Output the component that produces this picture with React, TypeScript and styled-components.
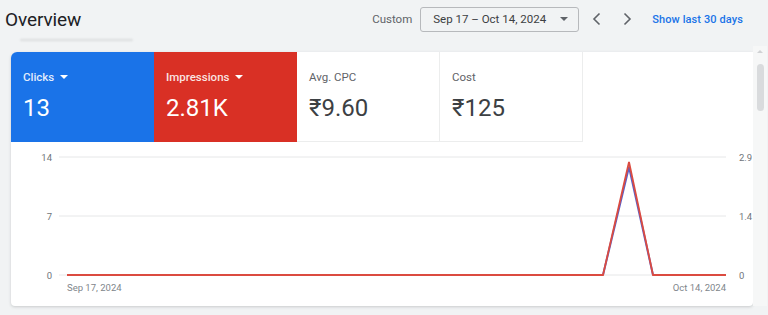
import React from "react";
import styled, { createGlobalStyle } from "styled-components";

const Global = createGlobalStyle`
  html, body { margin: 0; padding: 0; }
  body {
    background: #f1f3f4;
    font-family: Roboto, "Noto Sans", Arial, sans-serif;
    width: 768px;
    height: 315px;
    overflow: hidden;
  }
`;

const Page = styled.div`
  width: 768px;
  height: 315px;
  display: flex;
  flex-direction: column;
`;

const Header = styled.header`
  height: 38px;
  display: flex;
  align-items: center;
  padding: 0 25px 0 5px;
  box-sizing: border-box;
`;

const Title = styled.h1`
  margin: 0;
  font-size: 19px;
  font-weight: 400;
  color: #202124;
  letter-spacing: -0.1px;
  flex: 1;
`;

const RangeLabel = styled.span`
  font-size: 11.5px;
  color: #5f6368;
  margin-right: 8px;
`;

const DateBox = styled.div`
  width: 159px;
  height: 25px;
  margin-right: 3px;
  box-sizing: border-box;
  border: 1px solid #b7b9bc;
  border-radius: 3px;
  display: flex;
  align-items: center;
  justify-content: space-between;
  padding: 0 10px 0 12px;
  font-size: 11.5px;
  color: #3c4043;
`;

const Caret = styled.span<{ $color: string }>`
  display: inline-block;
  width: 0;
  height: 0;
  border-left: 4px solid transparent;
  border-right: 4px solid transparent;
  border-top: 4px solid ${(p) => p.$color};
`;

const NavButton = styled.button`
  width: 30px;
  height: 28px;
  border: 0;
  background: none;
  padding: 0;
  display: flex;
  align-items: center;
  justify-content: center;
  color: #5f6368;
`;

const LinkText = styled.a`
  margin-left: 10px;
  font-size: 11px;
  font-weight: 500;
  color: #1a73e8;
  text-decoration: none;
  letter-spacing: 0.1px;
`;

const TabShadow = styled.div`
  margin-left: 20px;
  width: 113px;
  height: 2px;
  margin-top: 1px;
  background: rgba(0, 0, 0, 0.09);
  filter: blur(1px);
  border-radius: 2px;
`;

const Body = styled.div`
  display: flex;
  margin-top: 11px;
`;

const Card = styled.section`
  margin-left: 11px;
  width: 742px;
  height: 254px;
  background: #fff;
  border-radius: 6px 0 4px 4px;
  box-shadow: 0 1px 3px rgba(60, 64, 67, 0.22);
  overflow: hidden;
  display: flex;
  flex-direction: column;
`;

const Tiles = styled.div`
  display: flex;
  height: 90px;
`;

const Tile = styled.div<{ $bg?: string }>`
  width: 143px;
  box-sizing: border-box;
  padding: 18px 0 0 12px;
  background: ${(p) => p.$bg || "#fff"};
  color: ${(p) => (p.$bg ? "#fff" : "#3c4043")};
  border-right: ${(p) => (p.$bg ? "none" : "1px solid #eceded")};
  border-bottom: ${(p) => (p.$bg ? "none" : "1px solid #eceded")};
`;

const TileLabel = styled.div<{ $light?: boolean }>`
  font-size: 11.5px;
  line-height: 14px;
  display: flex;
  align-items: center;
  gap: 6px;
  color: ${(p) => (p.$light ? "rgba(255,255,255,0.88)" : "#5f6368")};
  font-weight: ${(p) => (p.$light ? 500 : 400)};
`;

const TileValue = styled.div`
  margin-top: 10px;
  font-size: 24px;
  line-height: 28px;
  font-weight: 400;
`;

const Chart = styled.svg`
  display: block;
  width: 742px;
  height: 164px;
`;

const ScrollTrack = styled.div`
  width: 14px;
  height: 260px;
  margin-top: -6px;
  background: #f6f7f7;
  display: flex;
  flex-direction: column;
  align-items: center;
  padding-top: 4px;
  box-sizing: border-box;
`;

const ScrollArrow = styled.span`
  width: 0;
  height: 0;
  border-left: 3px solid transparent;
  border-right: 3px solid transparent;
  border-bottom: 3px solid #d0d2d4;
`;

const ScrollThumb = styled.div`
  margin-top: 11px;
  width: 7px;
  height: 47px;
  border-radius: 4px;
  background: #d9dbdd;
`;

const tiles = [
  { label: "Clicks", value: "13", bg: "#1a73e8", caret: true },
  { label: "Impressions", value: "2.81K", bg: "#d93025", caret: true },
  { label: "Avg. CPC", value: "₹9.60" },
  { label: "Cost", value: "₹125" },
];

// chart coordinates are page coordinates minus card origin (11, 142)
const ox = 11;
const oy = 142;
const gridYs = [157, 216, 275];
const leftLabels = ["14", "7", "0"];
const rightLabels = ["2.9", "1.4", "0"];

const pts = (arr: [number, number][]) =>
  arr.map(([x, y]) => `${x - ox},${y - oy}`).join(" ");

const Chevron = ({ dir }: { dir: "left" | "right" }) => (
  <svg width="12" height="14" viewBox="0 0 12 14" fill="none">
    <path
      d={dir === "left" ? "M8.5 1.5 L3 7 L8.5 12.5" : "M3.5 1.5 L9 7 L3.5 12.5"}
      stroke="#5f6368"
      strokeWidth="1.6"
    />
  </svg>
);

export default function App() {
  return (
    <Page>
      <Global />
      <Header>
        <Title>Overview</Title>
        <RangeLabel>Custom</RangeLabel>
        <DateBox>
          <span>Sep 17 – Oct 14, 2024</span>
          <Caret $color="#5f6368" />
        </DateBox>
        <NavButton aria-label="previous">
          <Chevron dir="left" />
        </NavButton>
        <NavButton aria-label="next">
          <Chevron dir="right" />
        </NavButton>
        <LinkText href="#">Show last 30 days</LinkText>
      </Header>
      <TabShadow />
      <Body>
        <Card>
          <Tiles>
            {tiles.map((t) => (
              <Tile key={t.label} $bg={t.bg}>
                <TileLabel $light={!!t.bg}>
                  {t.label}
                  {t.caret && <Caret $color="#fff" />}
                </TileLabel>
                <TileValue>{t.value}</TileValue>
              </Tile>
            ))}
          </Tiles>
          <Chart viewBox="0 0 742 164">
            {gridYs.map((y) => (
              <line
                key={y}
                x1={59 - ox}
                x2={726 - ox}
                y1={y - oy}
                y2={y - oy}
                stroke="#e6e7e8"
                strokeWidth="1"
              />
            ))}
            {leftLabels.map((l, i) => (
              <text
                key={"l" + l}
                x={52 - ox}
                y={gridYs[i] - oy + 3.5}
                textAnchor="end"
                fontSize="9.5"
                fill="#70757a"
                fontFamily="Roboto, Arial, sans-serif"
              >
                {l}
              </text>
            ))}
            {rightLabels.map((l, i) => (
              <text
                key={"r" + l}
                x={739 - ox}
                y={gridYs[i] - oy + 3.5}
                fontSize="9.5"
                fill="#70757a"
                fontFamily="Roboto, Arial, sans-serif"
              >
                {l}
              </text>
            ))}
            <polyline
              points={pts([
                [603, 275],
                [629, 167],
                [653, 275],
              ])}
              fill="none"
              stroke="#5b5fc7"
              strokeWidth="2"
            />
            <polyline
              points={pts([
                [67, 275],
                [603, 275],
                [629, 162],
                [653, 275],
                [726, 275],
              ])}
              fill="none"
              stroke="#db4b40"
              strokeWidth="1.8"
            />
            <text
              x={67 - ox}
              y={291 - oy}
              fontSize="9.5"
              fill="#80868b"
              fontFamily="Roboto, Arial, sans-serif"
            >
              Sep 17, 2024
            </text>
            <text
              x={726 - ox}
              y={291 - oy}
              textAnchor="end"
              fontSize="9.5"
              fill="#80868b"
              fontFamily="Roboto, Arial, sans-serif"
            >
              Oct 14, 2024
            </text>
          </Chart>
        </Card>
        <ScrollTrack>
          <ScrollArrow />
          <ScrollThumb />
        </ScrollTrack>
      </Body>
    </Page>
  );
}
